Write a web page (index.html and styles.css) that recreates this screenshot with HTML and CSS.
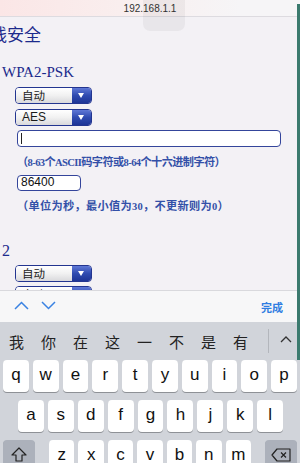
FILE: index.html
```html
<!DOCTYPE html>
<html lang="zh-CN">
<head>
  <meta charset="UTF-8">
  <meta name="viewport" content="width=device-width, initial-scale=1.0">
  <title>无线安全</title>
  <link rel="stylesheet" href="styles.css">
</head>
<body>
  <!-- Address bar -->
  <div class="urlbar">
    <span class="url">192.168.1.1</span>
    <div class="tab-ghost"></div>
  </div>

  <!-- Router page -->
  <div class="page">
    <h1 class="title">无线安全</h1>
    <div class="mode">WPA2-PSK</div>
    <div class="form">
      <div class="select"><span class="select-text cjk">自动</span><span class="select-arrow"></span></div>
      <div class="select gap-s"><span class="select-text">AES</span><span class="select-arrow"></span></div>
      <div class="input wide"><span class="caret"></span></div>
      <div class="hint hint-first">（<span class="latin">8-63</span>个<span class="latin">ASCII</span>码字符或<span class="latin">8-64</span>个十六进制字符）</div>
      <div class="input short">86400</div>
      <div class="hint hint-second">（单位为秒，最小值为<span class="latin">30</span>，不更新则为<span class="latin">0</span>）</div>
    </div>
    <div class="mode mode-second">2</div>
    <div class="form">
      <div class="select gap-xs"><span class="select-text cjk">自动</span><span class="select-arrow"></span></div>
      <div class="select gap-xs"><span class="select-text cjk">自动</span><span class="select-arrow"></span></div>
    </div>
  </div>

  <!-- Keyboard accessory bar -->
  <div class="accessory">
    <div class="arrows">
      <svg width="15" height="9" viewBox="0 0 15 9"><path d="M1 8 L7.5 1.5 L14 8" fill="none" stroke="#3a82e2" stroke-width="1.5"/></svg>
      <svg width="15" height="9" viewBox="0 0 15 9"><path d="M1 1 L7.5 7.5 L14 1" fill="none" stroke="#3a82e2" stroke-width="1.5"/></svg>
    </div>
    <span class="done">完成</span>
  </div>

  <!-- Keyboard -->
  <div class="keyboard">
    <div class="candidates">
      <span>我</span><span>你</span><span>在</span><span>这</span><span>一</span><span>不</span><span>是</span><span>有</span>
      <div class="cand-sep"></div>
      <svg class="cand-more" width="12" height="7" viewBox="0 0 12 7"><path d="M1 6 L6 1 L11 6" fill="none" stroke="#333" stroke-width="1.3"/></svg>
    </div>
    <div class="row row1">
      <div class="key">q</div><div class="key">w</div><div class="key">e</div><div class="key">r</div><div class="key">t</div>
      <div class="key">y</div><div class="key">u</div><div class="key">i</div><div class="key">o</div><div class="key">p</div>
    </div>
    <div class="row row2">
      <div class="key">a</div><div class="key">s</div><div class="key">d</div><div class="key">f</div><div class="key">g</div>
      <div class="key">h</div><div class="key">j</div><div class="key">k</div><div class="key">l</div>
    </div>
    <div class="row row3">
      <div class="key key-dark key-wide">
        <svg width="16" height="15" viewBox="0 0 16 15"><path d="M8 1 L15 8 L11 8 L11 14 L5 14 L5 8 L1 8 Z" fill="none" stroke="#222" stroke-width="1.2" stroke-linejoin="round"/></svg>
      </div>
      <div class="letters">
        <div class="key">z</div><div class="key">x</div><div class="key">c</div><div class="key">v</div>
        <div class="key">b</div><div class="key">n</div><div class="key">m</div>
      </div>
      <div class="key key-dark key-wide">
        <svg width="20" height="14" viewBox="0 0 20 14"><path d="M6 1 L19 1 L19 13 L6 13 L1 7 Z" fill="none" stroke="#222" stroke-width="1.2" stroke-linejoin="round"/><path d="M10 4.5 L15 9.5 M15 4.5 L10 9.5" stroke="#222" stroke-width="1.2"/></svg>
      </div>
    </div>
  </div>

  <div class="edge"></div>
</body>
</html>
```

FILE: styles.css
```css
body {
  margin: 0;
  width: 300px;
  height: 463px;
  overflow: hidden;
  display: flex;
  flex-direction: column;
  position: relative;
  background-color: #f3f1f5;
  font-family: "Liberation Sans", "Noto Sans CJK SC", sans-serif;
  text-autospace: no-autospace;
}

/* Address bar */
.urlbar {
  height: 16px;
  flex-shrink: 0;
  border-bottom: 1px solid #dddbe0;
  background: linear-gradient(90deg, #fbe6e6 0%, #f9eeee 40%, #f6f5f7 80%);
  display: flex;
  justify-content: center;
  align-items: center;
  position: relative;
}

.url {
  font-size: 10px;
  color: #333;
  margin-top: 1px;
}

.tab-ghost {
  position: absolute;
  left: 143px;
  top: 0;
  width: 42px;
  height: 31px;
  border-radius: 0 0 7px 7px;
  background-color: rgba(0, 0, 0, 0.045);
}

/* Page */
.page {
  flex: 1;
  overflow: hidden;
  color: #1c2a8c;
}

.title {
  margin: 7px 0 0 -27px;
  font-size: 17px;
  line-height: 20px;
  font-weight: normal;
  font-family: "Noto Sans CJK SC", sans-serif;
  color: #1c2a8c;
  white-space: nowrap;
}

.mode {
  margin: 18px 0 0 2px;
  font-family: "Liberation Serif", "Noto Sans CJK SC", serif;
  font-size: 15px;
  line-height: 20px;
  color: #1c2a8c;
}

.mode-second {
  margin-top: 26px;
  font-size: 16px;
}

.form {
  padding-left: 15px;
}

.select {
  margin-top: 5px;
  width: 77px;
  height: 17px;
  box-sizing: border-box;
  border: 1px solid #233590;
  border-radius: 4px;
  display: flex;
  overflow: hidden;
}

.gap-s {
  margin-top: 5px;
}

.gap-xs {
  margin-top: 4px;
}

.select-text {
  flex: 1;
  padding-left: 6px;
  font-size: 12px;
  line-height: 15px;
  color: #1a1a1a;
  background: linear-gradient(180deg, #ffffff 0%, #f1f1f1 50%, #d9d9dc 100%);
}

.select-text.cjk {
  font-family: "Noto Sans CJK SC", sans-serif;
  font-size: 11.5px;
}

.select-arrow {
  width: 19px;
  background: linear-gradient(180deg, #5f78d6 0%, #2f4bb0 50%, #1d3496 100%);
  position: relative;
}

.select-arrow::after {
  content: "";
  position: absolute;
  left: 6px;
  top: 5px;
  border-left: 3.5px solid transparent;
  border-right: 3.5px solid transparent;
  border-top: 5px solid #fff;
}

.input {
  margin-left: 2px;
  box-sizing: border-box;
  background-color: #fff;
  border: 1.5px solid #34459b;
  border-radius: 4px;
  font-size: 12px;
  color: #111;
}

.wide {
  margin-top: 4px;
  width: 264px;
  height: 17px;
  padding: 2px 3px;
}

.caret {
  display: block;
  width: 1px;
  height: 11px;
  background-color: #222;
}

.short {
  margin-top: 4px;
  width: 64px;
  height: 16px;
  line-height: 13px;
  padding-left: 3px;
}

.hint {
  margin: 6px 0 0 2px;
  font-family: "Noto Sans CJK SC", sans-serif;
  font-size: 11.2px;
  line-height: 16px;
  font-weight: bold;
  color: #3350a8;
  white-space: nowrap;
}

.hint-first {
  letter-spacing: -0.6px;
}

.hint-second {
  letter-spacing: 0.3px;
}

.hint .latin {
  font-family: "Liberation Serif", serif;
  font-size: 10.5px;
}

/* Accessory bar */
.accessory {
  height: 31px;
  flex-shrink: 0;
  border-top: 1px solid #d9d9dd;
  background-color: #f7f7f8;
  display: flex;
  justify-content: space-between;
  align-items: center;
  padding: 0 17px 0 14px;
}

.arrows {
  display: flex;
  gap: 12px;
  margin-top: -3px;
}

.done {
  font-family: "Noto Sans CJK SC", sans-serif;
  font-size: 11px;
  font-weight: bold;
  color: #2f7de1;
  margin-top: 1px;
}

/* Keyboard */
.keyboard {
  height: 141px;
  flex-shrink: 0;
  background-color: #d1d4da;
  padding: 0 3px;
  box-sizing: border-box;
}

.candidates {
  height: 38px;
  display: flex;
  align-items: center;
  padding-left: 6px;
  font-family: "Noto Sans CJK SC", sans-serif;
  font-size: 15px;
  color: #222;
}

.candidates span {
  width: 32px;
}

.cand-sep {
  width: 1px;
  height: 24px;
  margin-left: 3px;
  background-color: #b3b6bc;
}

.cand-more {
  margin-left: 11px;
  margin-top: -3px;
}

.row {
  display: flex;
  gap: 4px;
  height: 32px;
  margin-bottom: 8px;
}

.row2 {
  padding: 0 14px 0 15px;
}

.row3 {
  justify-content: space-between;
}

.key {
  flex: 1;
  background-color: #fff;
  border-radius: 4px;
  box-shadow: 0 1px 0 #8e9196;
  display: flex;
  justify-content: center;
  align-items: center;
  font-size: 17px;
  color: #111;
  padding-bottom: 3px;
  box-sizing: border-box;
}

.letters {
  display: flex;
  gap: 4px;
  width: 202px;
}

.key-dark {
  background-color: #acb1bb;
}

.key-wide {
  flex: none;
  width: 32px;
}

.edge {
  position: absolute;
  right: 0;
  top: 4px;
  width: 3px;
  height: 356px;
  background-color: #3b7a6e;
}
```
